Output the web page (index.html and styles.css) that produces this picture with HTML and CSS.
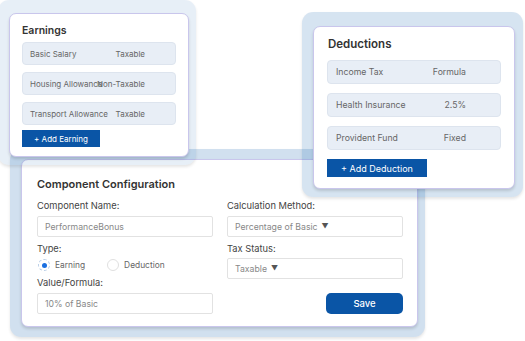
FILE: index.html
```html
<!DOCTYPE html>
<html lang="en">

<head>
  <meta charset="UTF-8">
  <meta name="viewport" content="width=device-width, initial-scale=1.0">
  <title>Salary Components</title>
  <link rel="stylesheet" href="styles.css">
</head>

<body>
  <div class="canvas">
    <!-- config sits underneath the two list windows -->
    <div class="frame frame-config">
      <div class="card config-card">
        <h2 class="config-title">Component Configuration</h2>
        <div class="config-grid">
          <div class="config-col">
            <label class="field-label">Component Name:</label>
            <div class="input">PerformanceBonus</div>
            <label class="field-label spaced tight">Type:</label>
            <div class="radio-group">
              <span class="radio-option"><span class="radio checked"></span>Earning</span>
              <span class="radio-option"><span class="radio"></span>Deduction</span>
            </div>
            <label class="field-label after-radio">Value/Formula:</label>
            <div class="input">10% of Basic</div>
          </div>
          <div class="config-col">
            <label class="field-label">Calculation Method:</label>
            <div class="input select">Percentage of Basic <span class="caret">&#9660;</span></div>
            <label class="field-label spaced tight">Tax Status:</label>
            <div class="input select">Taxable <span class="caret">&#9660;</span></div>
            <button class="save-btn">Save</button>
          </div>
        </div>
      </div>
    </div>

    <div class="frame frame-earnings">
      <div class="card earnings-card">
        <h2 class="card-title">Earnings</h2>
        <div class="rows">
          <div class="row"><span class="row-name">Basic Salary</span><span class="row-value">Taxable</span></div>
          <div class="row"><span class="row-name">Housing Allowance</span><span class="row-value">Non-Taxable</span></div>
          <div class="row"><span class="row-name">Transport Allowance</span><span class="row-value">Taxable</span></div>
        </div>
        <button class="add-btn">+ Add Earning</button>
      </div>
    </div>

    <div class="frame frame-deductions">
      <div class="card deductions-card">
        <h2 class="card-title">Deductions</h2>
        <div class="rows">
          <div class="row"><span class="row-name">Income Tax</span><span class="row-value">Formula</span></div>
          <div class="row"><span class="row-name">Health Insurance</span><span class="row-value">2.5%</span></div>
          <div class="row"><span class="row-name">Provident Fund</span><span class="row-value">Fixed</span></div>
        </div>
        <button class="add-btn">+ Add Deduction</button>
      </div>
    </div>
  </div>
</body>

</html>
```

FILE: styles.css
```css
* {
  box-sizing: border-box;
  margin: 0;
  padding: 0;
  font-family: 'Inter', 'Liberation Sans', sans-serif;
}

body {
  width: 525px;
  height: 341px;
  background: #ffffff;
  overflow: hidden;
}

.canvas {
  position: relative;
  width: 525px;
  height: 341px;
}

/* translucent backdrop behind each window */
.frame {
  position: absolute;
  border-radius: 11px;
  box-shadow: 0 2px 3px rgba(0, 0, 0, 0.1);
}

.frame-earnings {
  left: -2px;
  top: 0;
  width: 198px;
  padding: 13px 7px 8px 11px;
  background: rgba(0, 85, 165, 0.095);
}

.frame-deductions {
  left: 302px;
  top: 12px;
  width: 221px;
  padding: 14px 8px 8px 11px;
  background: rgba(0, 85, 165, 0.16);
}

.frame-config {
  left: 10px;
  top: 149px;
  width: 415px;
  padding: 10px 7px 10px 11px;
  background: rgba(0, 85, 165, 0.18);
}

.card {
  background: #fff;
  border: 1px solid #c9c6ec;
  border-radius: 7px;
  box-shadow: 0 2px 3px rgba(0, 0, 0, 0.14);
}

.card-title {
  font-size: 10.5px;
  line-height: 15px;
  font-weight: 600;
  color: #333;
}

.earnings-card {
  padding: 9px 12px 9px 12px;
}

.earnings-card .card-title {
  margin-bottom: 4px;
}

.deductions-card {
  padding: 10px 13px 11px 13px;
}

.deductions-card .card-title {
  font-size: 11.5px;
  margin-bottom: 8px;
  padding-left: 1px;
}

.rows {
  display: flex;
  flex-direction: column;
  gap: 7px;
}

.deductions-card .rows {
  gap: 9px;
}

.row {
  display: flex;
  align-items: center;
  height: 23px;
  padding: 0 30px 0 7px;
  background: #e8eef6;
  border: 1px solid #dde4ee;
  border-radius: 4px;
  font-size: 8px;
  color: #666;
}

.deductions-card .row {
  height: 24px;
  padding: 0 34px 0 8px;
  font-size: 8.7px;
}

.row-name {
  flex: 1;
  min-width: 0;
  white-space: nowrap;
}

.row-value {
  flex: none;
  white-space: nowrap;
}

.add-btn {
  display: block;
  margin-top: 5px;
  width: 78px;
  height: 17px;
  border: none;
  background: #0a55a6;
  color: #fff;
  font-size: 8px;
}

.deductions-card .add-btn {
  margin-top: 9px;
  width: 100px;
  height: 18px;
  font-size: 9px;
}

.config-card {
  padding: 17px 14px 12px 15px;
}

.config-title {
  font-size: 11px;
  line-height: 15px;
  font-weight: 600;
  color: #333;
  margin-bottom: 8px;
}

.config-grid {
  display: grid;
  grid-template-columns: 176px 176px;
  column-gap: 14px;
}

.config-col {
  display: flex;
  flex-direction: column;
}

.field-label {
  font-size: 9.3px;
  line-height: 12px;
  color: #444;
  margin-bottom: 4px;
}

.field-label.spaced {
  margin-top: 6px;
}

.field-label.tight {
  margin-bottom: 3px;
}

.field-label.after-radio {
  margin-top: 5px;
}

.input {
  height: 21px;
  display: flex;
  align-items: center;
  padding-left: 7px;
  border: 1px solid #e2e2e2;
  border-radius: 2px;
  font-size: 8.7px;
  color: #888;
}

.caret {
  font-size: 7px;
  color: #555;
  margin-left: 4px;
}

.radio-group {
  display: flex;
  gap: 22px;
  height: 14px;
  align-items: center;
  padding-left: 1px;
}

.radio-option {
  display: flex;
  align-items: center;
  gap: 5px;
  font-size: 8.4px;
  color: #666;
}

.radio {
  width: 12px;
  height: 12px;
  border-radius: 50%;
  border: 1px solid #e0e0e0;
  display: flex;
  align-items: center;
  justify-content: center;
}

.radio.checked {
  border: 1px dashed #b8cde6;
}

.radio.checked::after {
  content: '';
  width: 5px;
  height: 5px;
  border-radius: 50%;
  background: #1a6fe0;
}

.save-btn {
  align-self: flex-end;
  margin-top: 14px;
  width: 77px;
  height: 21px;
  border: none;
  border-radius: 5px;
  background: #0a55a6;
  color: #fff;
  font-size: 9.5px;
  font-weight: 500;
}
```
